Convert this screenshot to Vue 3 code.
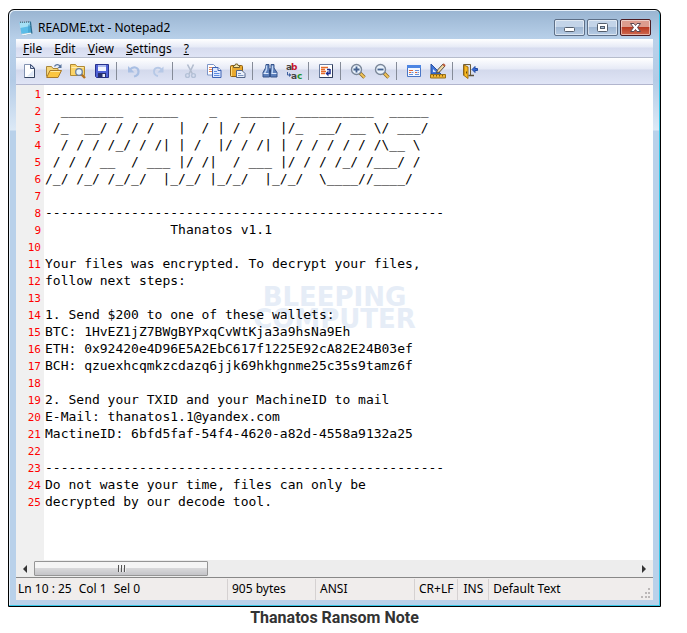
<script setup>
import { ref } from 'vue'

const rule = '-'.repeat(51)

const lines = [
  rule,
  String.raw`  ________  _____    _   _____  __________  _____`,
  String.raw` /_  __/ / / /   |  / | / /   |/_  __/ __ \/ ___/`,
  String.raw`  / / / /_/ / /| | /  |/ / /| | / / / / / /\__ \ `,
  String.raw` / / / __  / ___ |/ /|  / ___ |/ / / /_/ /___/ /`,
  String.raw`/_/ /_/ /_/_/  |_/_/ |_/_/  |_/_/  \____//____/`,
  '',
  rule,
  ' '.repeat(16) + 'Thanatos v1.1',
  '',
  'Your files was encrypted. To decrypt your files,',
  'follow next steps:',
  '',
  '1. Send $200 to one of these wallets:',
  'BTC: 1HvEZ1jZ7BWgBYPxqCvWtKja3a9hsNa9Eh',
  'ETH: 0x92420e4D96E5A2EbC617f1225E92cA82E24B03ef',
  'BCH: qzuexhcqmkzcdazq6jjk69hkhgnme25c35s9tamz6f',
  '',
  '2. Send your TXID and your MachineID to mail',
  'E-Mail: thanatos1.1@yandex.com',
  'MactineID: 6bfd5faf-54f4-4620-a82d-4558a9132a25',
  '',
  rule,
  'Do not waste your time, files can only be',
  'decrypted by our decode tool.'
]

const content = ref(lines.join('\n'))

const menus = [
  { key: 'F', rest: 'ile' },
  { key: 'E', rest: 'dit' },
  { key: 'V', rest: 'iew' },
  { key: 'S', rest: 'ettings' },
  { key: '?', rest: '' }
]
</script>

<template>
  <figure class="figure">
    <div class="window">
      <header class="title-bar">
        <svg class="app-icon" viewBox="0 0 16 16" aria-hidden="true">
          <path d="M2.500 2.500 13 1.500 14.500 13.500 5.500 15.500z" fill="#2f6f92" />
          <path d="M1.500 2.500 11.500 2 13 12.500 3.500 14z" fill="#5bbde8" />
          <path d="M1.500 2.500 11.500 2 12.300 6 2.100 8z" fill="#a5e0f5" />
          <path d="M3.500 14 13 12.500 13.500 13.800 5.500 15.500z" fill="#f3f7f8" />
          <path d="M2.500 3v-1.500M4.500 3v-1.500M6.500 3v-1.500M8.500 2.800v-1.500M10.500 2.800v-1.500" stroke="#5b7786" />
          <path d="M10 4.500h2l1 8h-3z" fill="#3a93c2" opacity=".5" />
        </svg>
        <h1 class="title">README.txt - Notepad2</h1>
        <div class="window-buttons">
          <button class="window-button" type="button" aria-label="Minimize">
            <svg viewBox="0 0 29 15"><rect x="9.500" y="7.500" width="10" height="4" rx="1" fill="#fff" stroke="#535e6c" /></svg>
          </button>
          <button class="window-button" type="button" aria-label="Maximize">
            <svg viewBox="0 0 29 15">
              <rect x="9.500" y="3.500" width="10" height="8" rx="1" fill="#fff" stroke="#535e6c" />
              <rect x="12.500" y="6.500" width="4" height="2" fill="#a9bfd8" stroke="#535e6c" />
            </svg>
          </button>
          <button class="window-button close" type="button" aria-label="Close">
            <svg viewBox="0 0 29 15">
              <path d="M9.500 3.500h3.500l1.500 2 1.500-2h3.500l-3 4 3 4H16l-1.500-2-1.500 2H9.500l3-4z" fill="#fff" stroke="#5c4750" />
            </svg>
          </button>
        </div>
      </header>

      <div class="client">
        <nav class="menu-bar" aria-label="Menu">
          <button v-for="m in menus" :key="m.key" class="menu" type="button"><u>{{ m.key }}</u>{{ m.rest }}</button>
        </nav>

        <div class="tool-bar" role="toolbar" aria-label="Tools">
          <button class="tool" type="button" aria-label="New">
            <svg viewBox="0 0 16 16">
              <path d="M2.500 1.500h6.500L12.500 5v9.500h-10z" fill="#fff" stroke="#8292b0" />
              <path d="M12.500 5v9.500h-10" fill="none" stroke="#34435f" />
              <path d="M8.500 1.500V5.500h4z" fill="#c9d5ea" stroke="#45557a" />
              <path d="M5 13.500 11.500 7v6.500z" fill="#dfe9f8" />
            </svg>
          </button>
          <button class="tool" type="button" aria-label="Open">
            <svg viewBox="0 0 16 16">
              <path d="M.5 13.500v-10h5l1.500 2h5v3" fill="#f6d678" stroke="#a9863a" />
              <path d="M.7 14.500 4 7.500h11.500l-3.500 7z" fill="#fbc540" stroke="#a9792a" />
              <path d="M4.500 8.500h9.500" stroke="#ffe9a0" />
              <path d="M8.500 3.500c1-2.500 4-2.500 5.500-.5" fill="none" stroke="#56739c" stroke-width="1.300" />
              <path d="M15.500 1v4h-4z" fill="#56739c" />
            </svg>
          </button>
          <button class="tool" type="button" aria-label="Browse">
            <svg viewBox="0 0 16 16">
              <path d="M.5 12.500v-11h5l1.500 2h7.500v9z" fill="#fbd468" stroke="#b18a34" />
              <path d="M1.500 4.500h12" stroke="#ffedb0" />
              <path d="m11.500 11.500 3.500 3.500" stroke="#b6731d" stroke-width="2.400" />
              <circle cx="9" cy="9" r="3.300" fill="#e3f3ff" stroke="#6c7f9d" stroke-width="1.300" />
            </svg>
          </button>
          <button class="tool" type="button" aria-label="Save">
            <svg viewBox="0 0 16 16">
              <path d="M1.500 1.500h13v13h-12l-1-1z" fill="#4f62d6" stroke="#27318d" />
              <path d="M4 2h8v6H4z" fill="#f2f5ff" />
              <path d="M4 2h8v2H4z" fill="#aebcf0" />
              <path d="M4 10h8v4.500H4z" fill="#27306f" />
              <path d="M8.500 11H11v3H8.500z" fill="#e7ebf8" />
            </svg>
          </button>
          <span class="separator"></span>
          <button class="tool" type="button" aria-label="Undo">
            <svg viewBox="0 0 16 16">
              <path d="M4 6.500c3-3.500 8.500-2.500 8.500 2 0 3-2 4.500-4.500 5" fill="none" stroke="#a9bfe3" stroke-width="2.200" />
              <path d="M2 3v6.500h6.500z" fill="#a9bfe3" />
            </svg>
          </button>
          <button class="tool" type="button" aria-label="Redo">
            <svg viewBox="0 0 16 16">
              <path d="M11.500 6.500C9 3.500 4 4.500 4 8.500c0 2.500 1.500 4 4 4.500" fill="none" stroke="#b6c8e6" stroke-width="1.800" />
              <path d="M13.500 3.500v6h-6z" fill="#b6c8e6" />
            </svg>
          </button>
          <span class="separator"></span>
          <button class="tool" type="button" aria-label="Cut">
            <svg viewBox="0 0 16 16">
              <path d="m5.500 1.500 5 9.500M11.500 1.500 7 11" fill="none" stroke="#b2bccd" stroke-width="1.600" />
              <circle cx="5.500" cy="12.500" r="1.900" fill="none" stroke="#b4c1d7" stroke-width="1.400" />
              <circle cx="11.500" cy="12.500" r="1.900" fill="none" stroke="#b4c1d7" stroke-width="1.400" />
            </svg>
          </button>
          <button class="tool" type="button" aria-label="Copy">
            <svg viewBox="0 0 16 16">
              <path d="M1.500 1.500h6l2.500 2.500v8H1.500z" fill="#fff" stroke="#7c95c8" />
              <path d="M3 4.500h4M3 6.500h4M3 8.500h4" stroke="#e2875a" />
              <path d="M6.500 4.500h5.500l3 3v7H6.500z" fill="#dfeaff" stroke="#3c62b4" />
              <path d="M12 4.500v3h3" fill="#fff" stroke="#3c62b4" />
              <path d="M8 8.500h3M8 10.500h5.500M8 12.500h5.500" stroke="#5c8be0" />
            </svg>
          </button>
          <button class="tool" type="button" aria-label="Paste">
            <svg viewBox="0 0 16 16">
              <rect x=".5" y="2.500" width="12" height="11" rx="1" fill="#e9a92f" stroke="#8d6014" />
              <path d="M1.500 4v9" stroke="#ffdb7c" />
              <path d="M3.500 4.500V2.500H5L5.500 1h2L8 2.500h1.500v2z" fill="#f6e6a9" stroke="#6f5c2c" />
              <path d="M6.500 7.500h5.500l3 3v4h-8.500z" fill="#eaf0fb" stroke="#53658a" />
              <path d="M8 10.500h3M8 12.500h5.500" stroke="#7c94bf" />
            </svg>
          </button>
          <span class="separator"></span>
          <button class="tool" type="button" aria-label="Find">
            <svg viewBox="0 0 16 16">
              <path d="M4 1.500h3v3l.5 2V14H1V9.500L3.500 5zM9 1.500h3V5L15 9.500V14H8.500V6.500l.5-2z" fill="#5d80bb" stroke="#35538a" />
              <path d="M4.500 2.500v4l-2 4M10.500 2.500v4l-.5 4" fill="none" stroke="#c3d8f6" stroke-width="1.400" />
              <path d="M1.500 10.500h5M9.500 10.500h5" stroke="#dce8fb" />
              <path d="M7 6.500h2v3H7z" fill="#2c4778" />
            </svg>
          </button>
          <button class="tool" type="button" aria-label="Replace">
            <svg viewBox="0 0 16 16" class="letters">
              <text x="0" y="7" fill="#444">a</text>
              <text x="5" y="7" fill="#c4142b">b</text>
              <text x="5" y="16" fill="#444">a</text>
              <text x="11" y="16" fill="#22962f">c</text>
              <path d="M1.500 9v3h2" fill="none" stroke="#3c5f9e" />
              <path d="M3 10v4l2.500-2z" fill="#3c5f9e" />
            </svg>
          </button>
          <span class="separator"></span>
          <button class="tool" type="button" aria-label="Word wrap">
            <svg viewBox="0 0 16 16">
              <path d="M1.500 1.500h13v13h-13z" fill="#fff" stroke="#6a7c9e" />
              <path d="M14.500 1.500v13h-13" fill="none" stroke="#303d5a" />
              <path d="M3 4.500h7M3 6.500h4M3 8.500h5M3 10.500h4" stroke="#e56b2c" stroke-width="1.300" />
              <path d="M12 6v4.500H9.500M9 6.500h3" fill="none" stroke="#1d2c90" stroke-width="1.500" />
              <path d="M10.500 7.500v6l-3-3z" fill="#1d2c90" />
            </svg>
          </button>
          <span class="separator"></span>
          <button class="tool" type="button" aria-label="Zoom in">
            <svg viewBox="0 0 16 16">
              <path d="m10 10 4.500 4.500" stroke="#8b6926" stroke-width="3.400" />
              <path d="m10.500 10.500 4 4" stroke="#f2c55b" stroke-width="1.800" />
              <circle cx="6.500" cy="6.500" r="5" fill="#e9f2fc" stroke="#7a8799" stroke-width="1.400" />
              <path d="M3.500 6.500h6M6.500 3.500v6" stroke="#45628f" stroke-width="1.800" />
            </svg>
          </button>
          <button class="tool" type="button" aria-label="Zoom out">
            <svg viewBox="0 0 16 16">
              <path d="m10 10 4.500 4.500" stroke="#8b6926" stroke-width="3.400" />
              <path d="m10.500 10.500 4 4" stroke="#f2c55b" stroke-width="1.800" />
              <circle cx="6.500" cy="6.500" r="5" fill="#e9f2fc" stroke="#7a8799" stroke-width="1.400" />
              <path d="M3.500 6.500h6" stroke="#45628f" stroke-width="1.800" />
            </svg>
          </button>
          <span class="separator"></span>
          <button class="tool" type="button" aria-label="Select scheme">
            <svg viewBox="0 0 16 16">
              <path d="M1.500 2.500h13v11h-13z" fill="#f4f8ff" stroke="#4a76c6" />
              <path d="M1 2h14v3H1z" fill="#4c85e3" />
              <path d="M3 7.500h4M3 9.500h2M9 9.500h2" stroke="#e2683a" />
              <path d="M9 7.500h4M5.500 9.500h2M3 11.500h4M11.500 9.500H13M9 11.500h4" stroke="#6a92d8" />
            </svg>
          </button>
          <button class="tool" type="button" aria-label="Customize schemes">
            <svg viewBox="0 0 16 16">
              <path d="M1 1v10h10z" fill="#3f74d8" stroke="#2750a4" />
              <path d="M3 6v3h3z" fill="#dce8fb" />
              <path d="M.5 11.500h15v3.500H.5z" fill="#f2b632" stroke="#97701a" />
              <path d="M3.500 12v1.500M6.500 12v1.500M9.500 12v1.500M12.500 12v1.500" stroke="#7c5910" />
              <path d="m6.500 10 1-3L13 1l2 2-5.500 6z" fill="#f0d9a4" stroke="#555049" />
              <path d="m13 1 2 2" stroke="#ba5b3e" stroke-width="2" />
            </svg>
          </button>
          <span class="separator"></span>
          <button class="tool" type="button" aria-label="Exit">
            <svg viewBox="0 0 16 16">
              <path d="M1.500 12.500V1.500h7V12" fill="#dce3ee" stroke="#6d5c39" />
              <path d="M2 2l4 2v11.500l-4-3z" fill="#f8b920" stroke="#a36f10" />
              <path d="M4.500 8.500v2" stroke="#6b4505" />
              <path d="M6.500 12.500H12" stroke="#5b503b" stroke-width="1.500" />
              <path d="M10 6.500 13 3.500v2h2.500v2H13v2z" fill="#3468da" stroke="#234b9f" />
            </svg>
          </button>
        </div>

        <main class="editor">
          <div class="watermark" aria-hidden="true">
            <span>BLEEPING</span>
            <span>COMPUTER</span>
          </div>
          <ol class="gutter" aria-hidden="true">
            <li v-for="n in lines.length" :key="n">{{ n }}</li>
          </ol>
          <textarea v-model="content" class="text" aria-label="Document text" wrap="off" spellcheck="false" :rows="lines.length"></textarea>
        </main>

        <div class="scroll-bar">
          <button class="arrow" type="button" aria-label="Scroll left">
            <svg viewBox="0 0 4 8"><path d="M4 0v8L0 4z" /></svg>
          </button>
          <div class="track"><div class="thumb"><i></i><i></i><i></i></div></div>
          <button class="arrow" type="button" aria-label="Scroll right">
            <svg viewBox="0 0 4 8"><path d="M0 0v8l4-4z" /></svg>
          </button>
        </div>

        <footer class="status-bar">
          <div class="pane position"><span>Ln 10 : 25</span><span>Col 1</span><span>Sel 0</span></div>
          <div class="pane size">905 bytes</div>
          <div class="pane encoding">ANSI</div>
          <div class="pane">CR+LF</div>
          <div class="pane mode">INS</div>
          <div class="pane scheme">Default Text</div>
          <svg class="grip" viewBox="0 0 10 10" aria-hidden="true">
            <path d="M7 0h2v2H7zM7 4h2v2H7zM7 8h2v2H7zM4 4h2v2H4zM4 8h2v2H4zM0 8h2v2H0z" fill="#bcb8b8" />
          </svg>
        </footer>
      </div>
    </div>
    <figcaption class="caption">Thanatos Ransom Note</figcaption>
  </figure>
</template>

<style>
body {
  background: #fff;
}
</style>

<style scoped>
.figure {
  margin: 0;
  padding: 9px 26px 0 8px;
  font-family: "Noto Sans", "Open Sans", sans-serif;
  font-size: 12px;
  color: #000;
}

button {
  margin: 0;
  padding: 0;
  border: 0;
  background: none;
  font: inherit;
  color: inherit;
}

.window {
  padding: 0 7px 6px;
  border: 1px solid #000;
  border-radius: 6px 6px 0 0;
  box-shadow: inset -1px -1px #35c7e8, inset 1px 1px #e6f0fa;
  background: linear-gradient(#99b4d1, #b9d1ea 30px, #b3cbe6 70px, #dce9f6 120px, #b9d1ea 121px);
}

.title-bar {
  display: flex;
  align-items: center;
  gap: 4px;
  height: 29px;
  padding: 0 2px;
}

.app-icon {
  width: 16px;
  height: 16px;
  margin-top: 6px;
}

.title {
  flex: 1;
  margin: 6px 0 0;
  font-size: 12px;
  font-weight: 400;
  line-height: 18px;
}

.window-buttons {
  display: flex;
  gap: 2px;
  margin-top: 6px;
}

.window-button {
  display: flex;
  box-sizing: border-box;
  width: 31px;
  height: 17px;
  border: 1px solid #5d6f87;
  border-radius: 2px;
  box-shadow: inset 0 0 0 1px rgba(255, 255, 255, 0.5);
  background: linear-gradient(#c3d4e8 50%, #9fb7d3 50%, #b7cce4);
}

.window-button.close {
  border-color: #4d1c22;
  background: linear-gradient(#dc9c8e 50%, #b93a22 50%, #cf6a50);
}

.window-button svg {
  width: 29px;
  height: 15px;
}

.menu-bar {
  display: flex;
  gap: 12px;
  height: 18px;
  padding-left: 7px;
  border-bottom: 1px solid #b6bccc;
  background: linear-gradient(#fff, #e6eaf6 8px, #d7dcef 9px, #dfe4f5);
}

.menu {
  line-height: 19px;
}

.tool-bar {
  display: flex;
  align-items: center;
  height: 26px;
  padding-left: 2px;
  border-bottom: 1px solid #b1b5cd;
  background: linear-gradient(#fff, #e6eaf6 11px, #d3d9ec 12px, #e0e5f6);
}

.tool {
  display: flex;
  flex: none;
  align-items: center;
  justify-content: center;
  width: 24px;
  height: 24px;
}

.tool svg {
  width: 16px;
  height: 16px;
}

.letters {
  overflow: visible;
  font: bold 9px "DejaVu Sans", sans-serif;
}

.separator {
  flex: none;
  width: 1px;
  height: 18px;
  margin: 0 5px 0 2px;
  background: #858b98;
}

.editor {
  position: relative;
  display: flex;
  min-height: 475px;
  background: #fff;
}

.gutter {
  flex: none;
  box-sizing: border-box;
  width: 28px;
  margin: 0;
  padding: 1px 3px 0 0;
  list-style: none;
  background: #f0f0f0;
  color: #f00;
  font-family: "DejaVu Sans Mono", monospace;
  font-size: 11px;
  line-height: 17px;
  text-align: right;
}

.text {
  position: relative;
  flex: 1;
  min-width: 0;
  margin: 0;
  padding: 0 0 0 1px;
  border: 0;
  outline: 0;
  resize: none;
  overflow: hidden;
  background: transparent;
  color: #000;
  font-family: "DejaVu Sans Mono", monospace;
  font-size: 13px;
  line-height: 17px;
}

.watermark {
  position: absolute;
  top: 201px;
  right: 0;
  left: 0;
  display: flex;
  flex-direction: column;
  align-items: center;
  color: #e6edf7;
  font-family: "DejaVu Sans", sans-serif;
  font-size: 26px;
  font-weight: 700;
  line-height: 22px;
}

.scroll-bar {
  display: flex;
  height: 16px;
  padding-top: 1px;
  background: #ededed;
}

.arrow {
  display: flex;
  align-items: center;
  justify-content: center;
  width: 18px;
}

.arrow svg {
  width: 4px;
  height: 8px;
  fill: #333;
}

.track {
  flex: 1;
}

.thumb {
  display: flex;
  align-items: center;
  justify-content: center;
  gap: 2px;
  box-sizing: border-box;
  width: 29%;
  height: 15px;
  border: 1px solid #959595;
  border-radius: 1px;
  background: linear-gradient(#f5f5f5 50%, #d8d8da 50%, #c4c4c8);
}

.thumb i {
  width: 1px;
  height: 7px;
  background: #555;
  box-shadow: 1px 0 #eee;
}

.status-bar {
  position: relative;
  display: flex;
  height: 21px;
  padding-top: 1px;
  border-top: 1px solid #888;
  background: #f0edec;
  line-height: 20px;
  white-space: nowrap;
}

.pane {
  padding: 0 4px;
  border-right: 1px solid #d5d1d1;
}

.position {
  display: flex;
  flex: 0 1 212px;
  gap: 7px;
  box-sizing: border-box;
  padding-left: 2px;
}

.size {
  flex: 0 1 79px;
}

.encoding {
  flex: 0 1 90px;
}

.mode {
  padding: 0 5px;
}

.scheme {
  flex: 1;
  border-right: 0;
}

.grip {
  position: absolute;
  right: 2px;
  bottom: 2px;
  width: 10px;
  height: 10px;
}

.caption {
  color: #333;
  font-family: Roboto, sans-serif;
  font-size: 16px;
  font-weight: 700;
  line-height: 22px;
  text-align: center;
}
</style>
